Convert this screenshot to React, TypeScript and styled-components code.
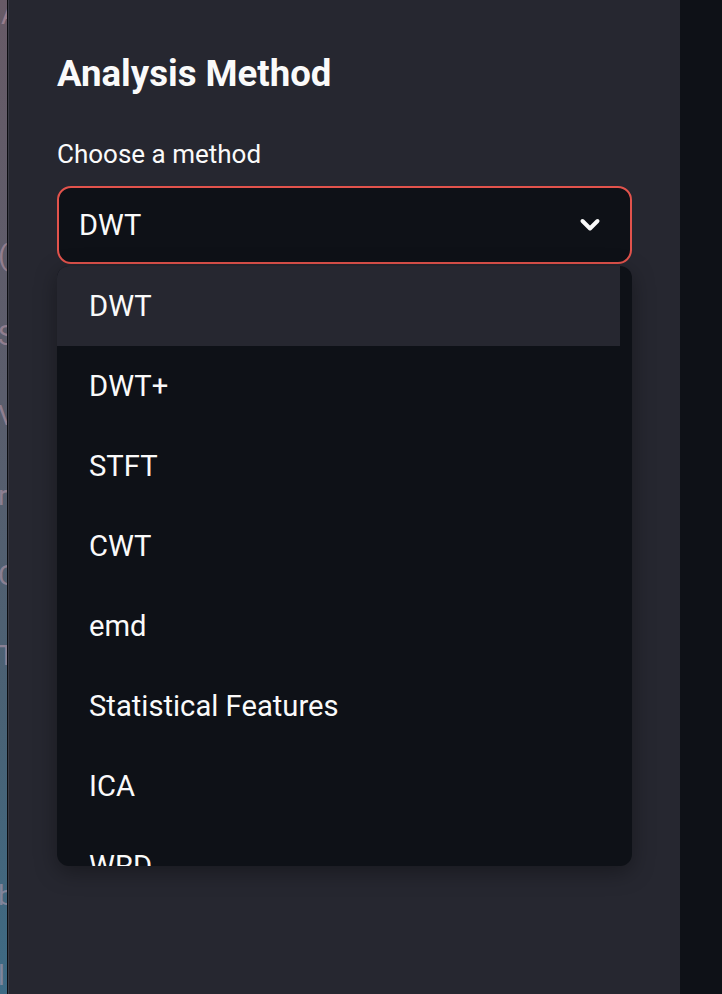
import styled, { createGlobalStyle } from "styled-components";

const GlobalStyle = createGlobalStyle`
  html, body {
    margin: 0;
    padding: 0;
    background: #0e1117;
  }
  * {
    box-sizing: border-box;
  }
`;

const methods = [
  "DWT",
  "DWT+",
  "STFT",
  "CWT",
  "emd",
  "Statistical Features",
  "ICA",
  "WRD",
];

// letters of the page behind, cut off by the sidebar
const ghostLines = ["(", "S", "V", "r", "C", "T", "", "", "b", "l"];

export default function App() {
  return (
    <>
      <GlobalStyle />
      <SPage>
        <SBackdrop>
          <SGhostTop>A</SGhostTop>
          {ghostLines.map((g, i) => (
            <SGhostLine key={i}>{g}</SGhostLine>
          ))}
        </SBackdrop>
        <SSidebar>
          <SHeading>Analysis Method</SHeading>
          <SLabel>Choose a method</SLabel>
          <SSelect>
            <SValue>DWT</SValue>
            <svg width="24" height="16" viewBox="0 0 24 16" fill="none">
              <path
                d="M4.5 4 L12 11.5 L19.5 4"
                stroke="#fafafa"
                strokeWidth="4"
                strokeLinecap="round"
                strokeLinejoin="round"
              />
            </svg>
          </SSelect>
          <SMenu>
            <SList>
              {methods.map((m, i) => (
                <SOption key={m} $active={i === 0}>
                  {m}
                </SOption>
              ))}
            </SList>
          </SMenu>
        </SSidebar>
        <SMain />
      </SPage>
    </>
  );
}

const SPage = styled.div`
  display: flex;
  height: 994px;
  overflow: hidden;
  font-family: Roboto, "Noto Sans", sans-serif;
`;

const SBackdrop = styled.div`
  width: 7px;
  flex-shrink: 0;
  overflow: hidden;
  background: linear-gradient(180deg, #675a66 0%, #5a5d6c 40%, #4a6174 70%, #3d6a84 100%);
  display: flex;
  flex-direction: column;
  font-size: 28px;
  color: rgba(214, 170, 190, 0.45);
`;

const SGhostTop = styled.div`
  height: 215px;
  flex-shrink: 0;
  line-height: 30px;
  padding-left: 1px;
`;

const SGhostLine = styled.div`
  height: 80px;
  flex-shrink: 0;
  display: flex;
  align-items: center;
  white-space: nowrap;
  margin-left: -2px;
`;

const SSidebar = styled.div`
  width: 673px;
  flex-shrink: 0;
  background: #262730;
  border-left: 1px solid #0c0d11;
  box-shadow: inset 1px 0 0 #3a3b45;
  padding: 52px 48px 0 49px;
  display: flex;
  flex-direction: column;
`;

const SHeading = styled.h2`
  margin: 0;
  font-size: 36.6px;
  line-height: 44px;
  font-weight: 700;
  color: #fafafa;
`;

const SLabel = styled.div`
  margin-top: 42px;
  font-size: 26px;
  line-height: 32px;
  color: #fafafa;
`;

const SSelect = styled.div`
  margin-top: 16px;
  height: 78px;
  border: 2px solid #e2534c;
  border-radius: 14px;
  background: #0e1117;
  display: flex;
  align-items: center;
  justify-content: space-between;
  padding: 0 28px 0 20px;
`;

const SValue = styled.span`
  font-size: 29px;
  color: #fafafa;
`;

const SMenu = styled.div`
  margin-top: 2px;
  height: 600px;
  border-radius: 12px;
  background: #0e1117;
  overflow: hidden;
  box-shadow: 0 6px 22px rgba(0, 0, 0, 0.35);
  padding-right: 12px;
`;

const SList = styled.ul`
  margin: 0;
  padding: 0;
  list-style: none;
`;

const SOption = styled.li<{ $active?: boolean }>`
  height: 80px;
  display: flex;
  align-items: center;
  padding-left: 32px;
  font-size: 29.2px;
  color: #fafafa;
  background: ${(p) => (p.$active ? "#262730" : "transparent")};
`;

const SMain = styled.div`
  flex: 1;
  background: #0e1117;
`;
